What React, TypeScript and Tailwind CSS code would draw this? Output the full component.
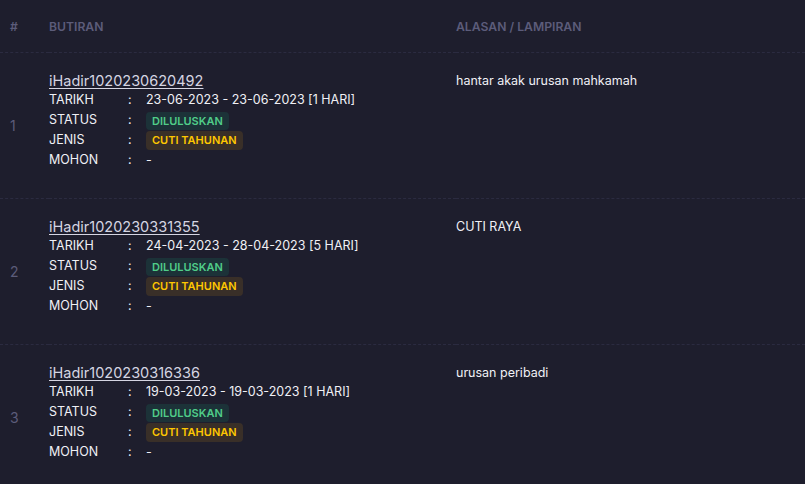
const rows = [
  {
    no: 1,
    ref: "iHadir1020230620492",
    tarikh: "23-06-2023 - 23-06-2023 [1 HARI]",
    alasan: "hantar akak urusan mahkamah",
  },
  {
    no: 2,
    ref: "iHadir1020230331355",
    tarikh: "24-04-2023 - 28-04-2023 [5 HARI]",
    alasan: "CUTI RAYA",
  },
  {
    no: 3,
    ref: "iHadir1020230316336",
    tarikh: "19-03-2023 - 19-03-2023 [1 HARI]",
    alasan: "urusan peribadi",
  },
];

function Line({ label, children }: { label: string; children: React.ReactNode }) {
  return (
    <div className="flex items-center h-[20px]">
      <span className="w-[79px]">{label}</span>
      <span className="w-[18px]">:</span>
      <span className="flex items-center">{children}</span>
    </div>
  );
}

export default function App() {
  return (
    <div
      className="w-[805px] h-[484px] overflow-hidden bg-[#1e1e2d] text-white"
      style={{ fontFamily: "Inter, 'Noto Sans', sans-serif" }}
    >
      <table className="w-full border-collapse">
        <thead>
          <tr className="border-b border-dashed border-[#2b2b40] text-left text-[12.2px] font-semibold text-[#5c5c7a]">
            <th className="h-[52px] pt-[2px] pl-[10px] w-[49px] font-semibold">#</th>
            <th className="w-[407px] pt-[2px] font-semibold">BUTIRAN</th>
            <th className="pt-[2px] font-semibold">ALASAN / LAMPIRAN</th>
          </tr>
        </thead>
        <tbody>
          {rows.map((r) => (
            <tr key={r.no} className="border-b border-dashed border-[#2b2b40] align-top">
              <td className="pl-[10px] align-middle text-[14px] text-[#5c5c7a]">{r.no}</td>
              <td className="pt-[19px] pb-[27px] h-[146px]">
                <a className="block text-[14.5px] leading-[18px] text-[#d5d5e2] underline underline-offset-2 mb-[1px]">
                  {r.ref}
                </a>
                <div className="text-[12.5px] text-[#f0f0f5]">
                  <Line label="TARIKH">{r.tarikh}</Line>
                  <Line label="STATUS">
                    <span className="rounded-[4px] bg-[#1c3238] px-[6px] h-[18px] leading-[18px] text-[11px] font-semibold text-[#50cd89]">
                      DILULUSKAN
                    </span>
                  </Line>
                  <Line label="JENIS">
                    <span className="rounded-[4px] bg-[#392f28] px-[6px] h-[19px] leading-[19px] text-[11px] font-semibold text-[#ffc700]">
                      CUTI TAHUNAN
                    </span>
                  </Line>
                  <Line label="MOHON">-</Line>
                </div>
              </td>
              <td className="pt-[19px] text-[12.5px] leading-[18px] text-[#f0f0f5]">{r.alasan}</td>
            </tr>
          ))}
        </tbody>
      </table>
    </div>
  );
}
